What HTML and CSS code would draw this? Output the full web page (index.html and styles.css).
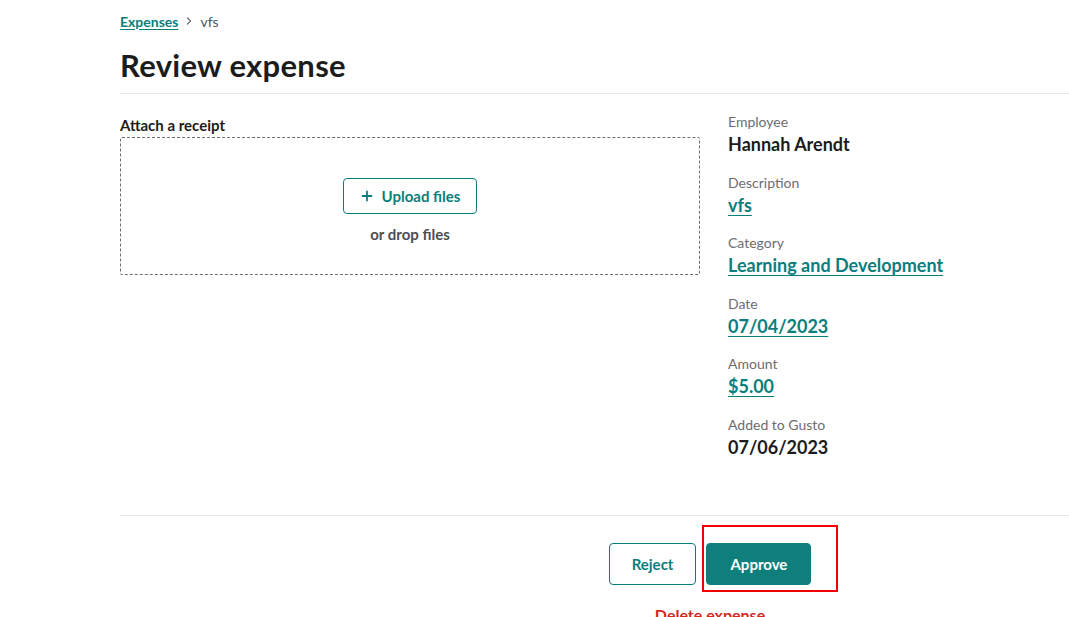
FILE: index.html
```html
<!DOCTYPE html>
<html lang="en">
<head>
<meta charset="utf-8">
<title>Review expense</title>
<link rel="stylesheet" href="styles.css">
</head>
<body>
<div class="page">
  <nav class="breadcrumb">
    <a class="crumb-link" href="#">Expenses</a>
    <svg class="chev" width="8" height="10" viewBox="0 0 8 10"><path d="M2.5 2 L5.5 5 L2.5 8" fill="none" stroke="#6c6c72" stroke-width="1.3" stroke-linecap="round" stroke-linejoin="round"/></svg>
    <span class="crumb-current">vfs</span>
  </nav>
  <h1 class="title">Review expense</h1>
  <hr class="divider">
  <div class="columns">
    <section class="receipt">
      <div class="receipt-label">Attach a receipt</div>
      <div class="dropzone">
        <button class="upload-btn" type="button">
          <svg class="plus" width="12" height="12" viewBox="0 0 12 12"><path d="M6 1.5 V10.5 M1.5 6 H10.5" stroke="#0a7e7c" stroke-width="1.8" stroke-linecap="round"/></svg>
          Upload files
        </button>
        <div class="drop-text">or drop files</div>
      </div>
    </section>
    <section class="details">
      <div class="field"><div class="label">Employee</div><div class="value">Hannah Arendt</div></div>
      <div class="field"><div class="label">Description</div><a class="value link" href="#">vfs</a></div>
      <div class="field"><div class="label">Category</div><a class="value link" href="#">Learning and Development</a></div>
      <div class="field"><div class="label">Date</div><a class="value link" href="#">07/04/2023</a></div>
      <div class="field"><div class="label">Amount</div><a class="value link" href="#">$5.00</a></div>
      <div class="field"><div class="label">Added to Gusto</div><div class="value">07/06/2023</div></div>
    </section>
  </div>
  <hr class="divider bottom">
  <div class="actions">
    <div class="buttons">
      <button class="btn secondary" type="button">Reject</button>
      <button class="btn primary" type="button">Approve</button>
      <div class="highlight"></div>
    </div>
    <a class="delete" href="#">Delete expense</a>
  </div>
</div>
</body>
</html>
```
FILE: styles.css
```css
html, body {
  margin: 0;
  padding: 0;
  overflow: hidden;
  background: #ffffff;
}
body {
  font-family: "Lato", "Open Sans", sans-serif;
  color: #1c1c1c;
}
.page {
  width: 1180px;
  padding-left: 120px;
  padding-top: 12px;
}
.breadcrumb {
  display: flex;
  align-items: center;
  gap: 7px;
  font-size: 14px;
  height: 18px;
}
.crumb-link {
  color: #0a7e7c;
  font-weight: 700;
  text-decoration: underline;
  text-underline-offset: 2px;
}
.chev { display: block; }
.crumb-current { color: #555559; }
.title {
  margin: 0;
  margin-top: 16px;
  font-size: 31px;
  line-height: 38px;
  font-weight: 700;
  letter-spacing: 0.3px;
}
.divider {
  border: none;
  border-top: 1px solid #e6e6e6;
  margin: 9px 0 0 0;
}
.columns {
  display: grid;
  grid-template-columns: 580px 572px;
  column-gap: 28px;
  margin-top: 20px;
}
.receipt-label {
  font-size: 15px;
  font-weight: 700;
  line-height: 22px;
}
.dropzone {
  margin-top: 1px;
  height: 138px;
  border: 1px dashed #6e6e6e;
  border-radius: 2px;
  display: flex;
  flex-direction: column;
  align-items: center;
  padding-top: 40px;
  box-sizing: border-box;
}
.upload-btn {
  display: flex;
  align-items: center;
  gap: 9px;
  height: 36px;
  padding: 0 16px 0 17px;
  border: 1px solid #0a7e7c;
  border-radius: 4px;
  background: #fff;
  color: #0a7e7c;
  font-family: inherit;
  font-size: 15px;
  font-weight: 700;
}
.drop-text {
  margin-top: 11px;
  font-size: 15px;
  font-weight: 700;
  color: #4d4d52;
}
.details {
  display: flex;
  flex-direction: column;
  gap: 16.5px;
  margin-top: -2px;
}
.field {
  display: flex;
  flex-direction: column;
}
.label {
  font-size: 14px;
  line-height: 20px;
  color: #6c6c72;
}
.value {
  font-size: 18px;
  line-height: 24px;
  font-weight: 700;
  color: #1c1c1c;
}
.link {
  color: #0a7e7c;
  text-decoration: underline;
  text-underline-offset: 3px;
  align-self: flex-start;
}
.divider.bottom { margin-top: 56px; }
.actions {
  display: flex;
  flex-direction: column;
  align-items: center;
  padding-top: 27px;
}
.buttons {
  position: relative;
  display: flex;
  gap: 10px;
}
.btn {
  height: 42px;
  border-radius: 4px;
  font-family: inherit;
  font-size: 15px;
  font-weight: 700;
  padding: 0 22px;
}
.secondary {
  background: #fff;
  color: #0a7e7c;
  border: 1px solid #0a7e7c;
}
.primary {
  background: #0e7f7c;
  color: #fff;
  border: 1px solid #0e7f7c;
  padding: 0 23px;
}
.highlight {
  position: absolute;
  left: 93px;
  top: -18px;
  width: 132px;
  height: 63px;
  border: 2px solid #f00000;
  pointer-events: none;
}
.delete {
  margin-top: 20px;
  color: #d5281e;
  font-size: 16px;
  font-weight: 700;
  text-decoration: none;
}
```
